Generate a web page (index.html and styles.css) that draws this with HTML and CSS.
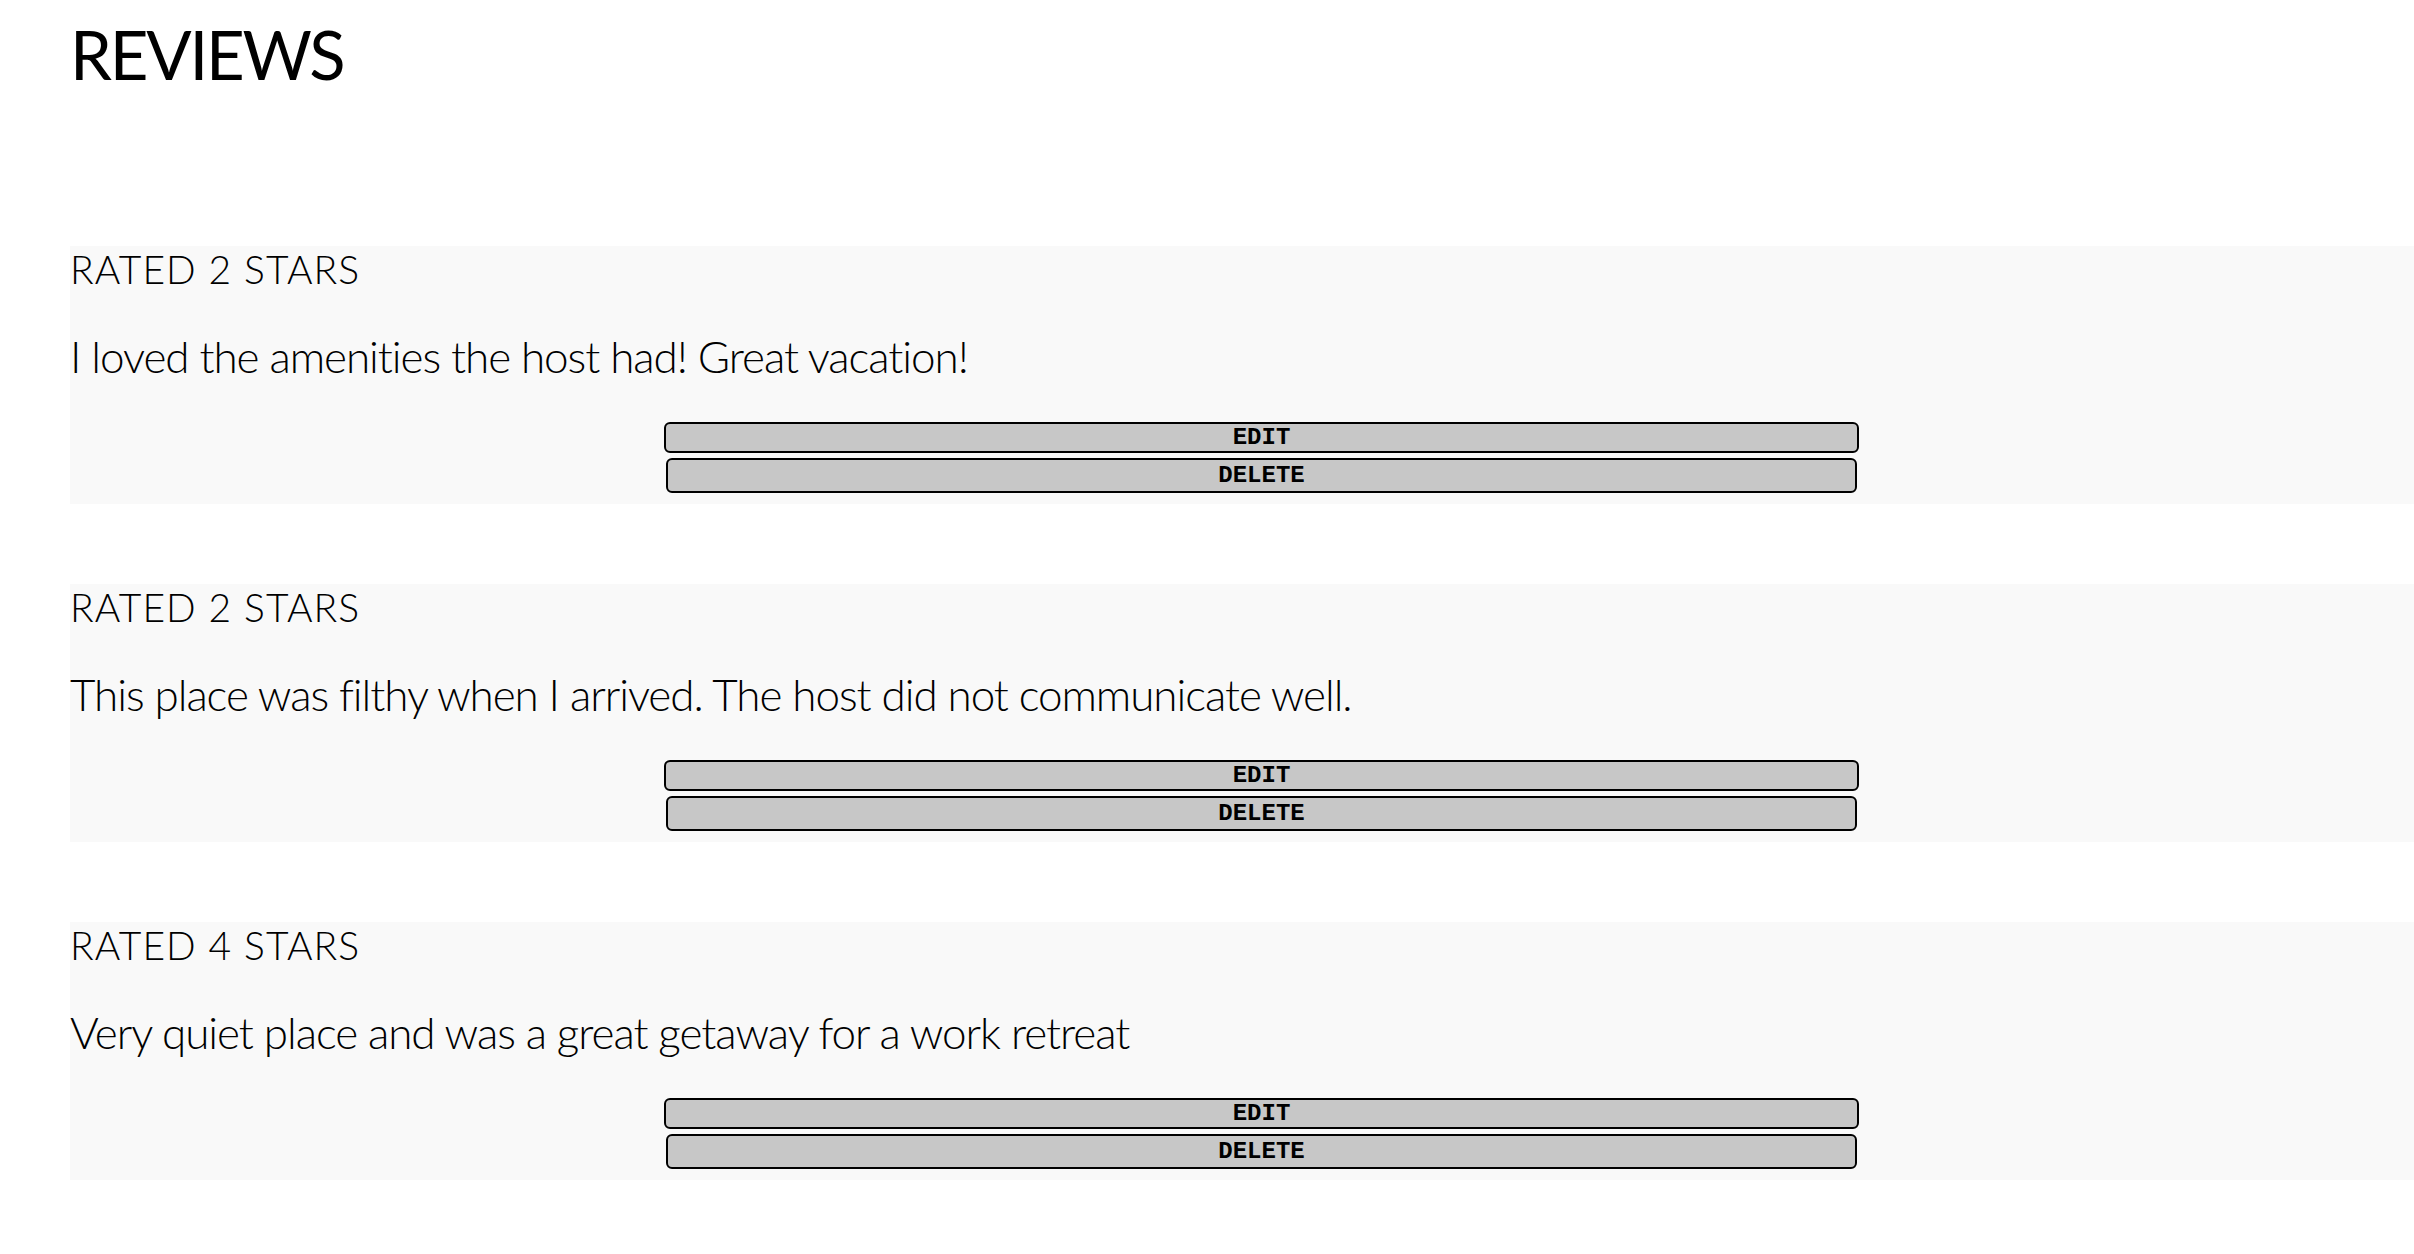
FILE: index.html
```html
<!DOCTYPE html>
<html lang="en">
<head>
<meta charset="utf-8">
<title>Reviews</title>
<link rel="stylesheet" href="styles.css">
</head>
<body>
<main class="page">
  <h1 class="page-title">REVIEWS</h1>
  <section class="review-list">
    <article class="review">
      <h3 class="review-rating">RATED 2 STARS</h3>
      <p class="review-text">I loved the amenities the host had! Great vacation!</p>
      <div class="review-actions">
        <button class="btn btn-edit">EDIT</button>
        <button class="btn btn-delete">DELETE</button>
      </div>
    </article>
    <article class="review">
      <h3 class="review-rating">RATED 2 STARS</h3>
      <p class="review-text">This place was filthy when I arrived. The host did not communicate well.</p>
      <div class="review-actions">
        <button class="btn btn-edit">EDIT</button>
        <button class="btn btn-delete">DELETE</button>
      </div>
    </article>
    <article class="review">
      <h3 class="review-rating">RATED 4 STARS</h3>
      <p class="review-text">Very quiet place and was a great getaway for a work retreat</p>
      <div class="review-actions">
        <button class="btn btn-edit">EDIT</button>
        <button class="btn btn-delete">DELETE</button>
      </div>
    </article>
  </section>
</main>
</body>
</html>
```

FILE: styles.css
```css
html, body {
  margin: 0;
  padding: 0;
  background: #ffffff;
  overflow-x: hidden;
}

.page {
  padding: 14px 0 0 70px;
  color: #000;
}

.page-title {
  margin: 0 0 152px 0;
  font-family: "Lato", "Liberation Sans", sans-serif;
  font-weight: 400;
  font-size: 67px;
  line-height: 80px;
  letter-spacing: -2.2px;
  color: #000;
}

.review-list {
  display: flex;
  flex-direction: column;
  gap: 80px;
}

.review {
  margin-right: -39px;
  background: #f9f9f9;
  padding: 0 0 11px 0;
  display: flex;
  flex-direction: column;
}

.review-rating {
  margin: 0;
  font-family: "Lato", "Liberation Sans", sans-serif;
  font-weight: 300;
  font-size: 39px;
  line-height: 47px;
  letter-spacing: 1.1px;
  color: #000;
}

.review-text {
  margin: 37px 0 0 0;
  font-family: "Lato", "Liberation Sans", sans-serif;
  font-weight: 300;
  font-size: 44px;
  line-height: 53px;
  letter-spacing: -1.05px;
  color: #000;
}

.review-actions {
  margin-top: 39px;
  display: flex;
  flex-direction: column;
  align-items: center;
  gap: 5px;
}

.btn {
  font-family: "Liberation Mono", "Courier New", monospace;
  font-weight: 700;
  font-size: 24px;
  color: #000;
  background: #c7c7c7;
  border: 2px solid #000;
  border-radius: 6px;
  padding: 0;
  margin: 0;
  line-height: 1;
}

.btn-edit {
  box-sizing: content-box;
  width: 50%;
  height: 27px;
}

.btn-delete {
  box-sizing: border-box;
  width: 50%;
  height: 35px;
}
```
